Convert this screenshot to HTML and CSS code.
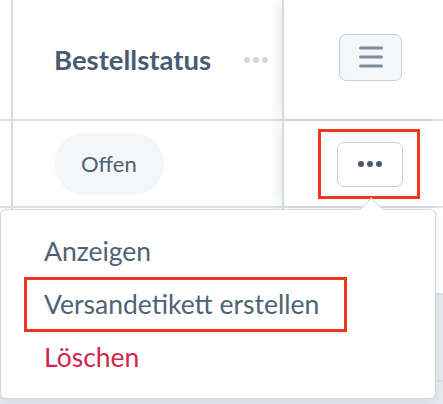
FILE: index.html
```html
<!DOCTYPE html>
<html lang="de">
<head>
<meta charset="utf-8">
<title>Bestellungen</title>
<link rel="stylesheet" href="styles.css">
</head>
<body>
<div class="table">
  <div class="row row-head">
    <div class="cell gutter"></div>
    <div class="cell col-status">
      <span class="th-label">Bestellstatus</span>
      <span class="th-more"><i></i><i></i><i></i></span>
    </div>
    <div class="cell col-actions">
      <button class="btn btn-columns" type="button" aria-label="Spalten">
        <svg width="24" height="22" viewBox="0 0 24 22" aria-hidden="true">
          <path d="M1.5 2h21M1.5 11h21M1.5 20h21" stroke="#7b8ca0" stroke-width="3" stroke-linecap="round"/>
        </svg>
      </button>
    </div>
  </div>
  <div class="row row-body">
    <div class="cell gutter"></div>
    <div class="cell col-status">
      <span class="pill">Offen</span>
    </div>
    <div class="cell col-actions">
      <span class="highlight highlight-btn">
        <button class="btn btn-dots" type="button" aria-label="Aktionen"><i></i><i></i><i></i></button>
      </span>
    </div>
  </div>
  <div class="row row-body">
    <div class="cell gutter"></div>
    <div class="cell col-status"></div>
    <div class="cell col-actions"></div>
  </div>
  <div class="row row-body row-muted">
    <div class="cell gutter"></div>
    <div class="cell col-status"></div>
    <div class="cell col-actions"></div>
  </div>
</div>

<div class="popover">
  <ul class="menu">
    <li class="menu-item">Anzeigen</li>
    <li class="menu-item"><span class="highlight highlight-item">Versandetikett erstellen</span></li>
    <li class="menu-item menu-danger">Löschen</li>
  </ul>
</div>
</body>
</html>
```

FILE: styles.css
```css
* { box-sizing: border-box; }

html, body {
  margin: 0;
  padding: 0;
}

body {
  width: 443px;
  height: 404px;
  overflow: hidden;
  position: relative;
  background: #e6eaee;
  font-family: "Lato", "Noto Sans", sans-serif;
  color: #4c5d71;
}

.table {
  display: flex;
  flex-direction: column;
  width: 100%;
}

.row {
  display: grid;
  grid-template-columns: 13px 269px 1fr;
  background: #fff;
}

.row-head { height: 121px; border-bottom: 2px solid #d9dee4; }
.row-body { height: 87px; border-bottom: 2px solid #dfe3e8; }
.row-muted { background: #e6eaee; }

.cell {
  display: flex;
  align-items: center;
  min-width: 0;
}

.gutter { border-right: 2px solid #d6dbe1; }

.col-status {
  padding-left: 41px;
}

.col-actions {
  border-left: 2px solid #d6dbe1;
  padding-left: 53px;
  box-shadow: -8px 0 10px -4px rgba(40, 55, 75, 0.10);
  position: relative;
}

.th-label {
  font-weight: 700;
  font-size: 27.5px;
  color: #4a5b70;
}

.th-more {
  display: flex;
  gap: 3px;
  margin-left: 33px;
}
.th-more i {
  width: 6px;
  height: 6px;
  border-radius: 50%;
  background: #d3d8de;
}

.btn {
  font: inherit;
  padding: 0;
  display: flex;
  align-items: center;
  justify-content: center;
  border: 1.5px solid #c6ced7;
  border-radius: 7px;
  cursor: pointer;
}

.btn-columns {
  width: 63px;
  height: 47px;
  margin-top: -5px;
  margin-left: 2px;
  background: #f4f6f9;
}

.pill {
  display: inline-flex;
  align-items: center;
  height: 62px;
  padding: 0 27px;
  border-radius: 31px;
  background: #f4f6f8;
  font-size: 22px;
  color: #4f5f73;
}

.highlight {
  display: inline-block;
  border: 3px solid #ef3420;
}

.highlight-btn {
  padding: 10px 14px 9px 16px;
  margin-left: -19px;
}

.btn-dots {
  width: 66px;
  height: 45px;
  gap: 3px;
  background: #fff;
  border-color: #cad1d9;
}
.btn-dots i {
  width: 6px;
  height: 6px;
  border-radius: 50%;
  background: #4b5a6d;
}

.popover {
  position: absolute;
  left: 0;
  top: 209px;
  width: 436px;
  height: 190px;
  background: #fff;
  border: 1.5px solid #d3d9e0;
  border-radius: 6px;
  box-shadow: 0 2px 10px rgba(40, 55, 75, 0.10);
  padding: 16px 0 0 0;
}

.popover::before {
  content: "";
  position: absolute;
  left: 362px;
  top: -9px;
  width: 16px;
  height: 16px;
  background: #fff;
  border-left: 1.5px solid #d3d9e0;
  border-top: 1.5px solid #d3d9e0;
  transform: rotate(45deg);
}

.menu {
  list-style: none;
  margin: 0;
  padding: 0;
  display: flex;
  flex-direction: column;
}

.menu-item {
  font-size: 26.5px;
  line-height: 51px;
  padding-left: 43px;
  color: #516276;
}

.highlight-item {
  line-height: 49px;
  padding: 0 25px 0 17px;
  margin-left: -20px;
}

.menu-danger { color: #d1254e; }
```
